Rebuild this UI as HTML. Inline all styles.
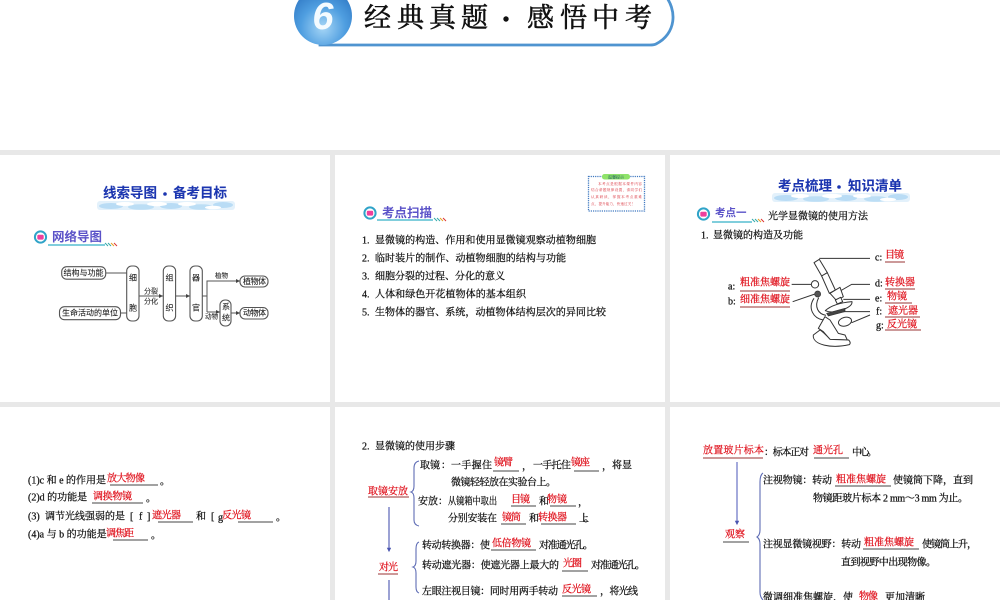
<!DOCTYPE html>
<html lang="zh"><head><meta charset="utf-8"><title>经典真题·感悟中考</title>
<style>
html,body{margin:0;padding:0;background:#fff;width:1000px;height:600px;overflow:hidden}
svg{display:block;filter:blur(.3px)}
text{font-family:"Liberation Serif","Noto Serif CJK SC",serif;font-size:10px;fill:#111;stroke:#111;stroke-width:.25;dominant-baseline:central}
.r{fill:#e0141f;stroke:#e0141f}
.s{font-size:8px;font-family:"Liberation Sans","Noto Sans CJK SC",sans-serif;fill:#222;stroke:#222;stroke-width:.08}
.u{stroke:#444;stroke-width:.9;fill:none}
.ru{stroke:#933;stroke-width:.9;fill:none}
.b{fill:#fff;stroke:#555;stroke-width:1.100}
.g{stroke:#555;stroke-width:1;fill:none}
.br{stroke:#5f6db5;stroke-width:1.100;fill:none}
.ti{font-family:"Liberation Sans","Noto Sans CJK SC",sans-serif;font-weight:700;font-size:13.500px;fill:#1c36b0;stroke:#1c36b0;stroke-width:.1}
.h{font-family:"Liberation Sans","Noto Sans CJK SC",sans-serif;font-weight:700;fill:#5a52c8;stroke:none}
.hd{font-size:27px;fill:#111;stroke:#111;stroke-width:.55}
.n{font-size:3.600px;fill:#d8303a;stroke:none}
.m{stroke:#333;stroke-width:3;fill:#fff;stroke-linejoin:round}
.l{stroke:#333;stroke-width:3;fill:none}
</style></head><body>
<svg width="1000" height="600" viewBox="0 0 1000 600" xmlns="http://www.w3.org/2000/svg">
<defs>
<radialGradient id="ball" cx=".5" cy=".7" r=".7"><stop offset="0" stop-color="#a6d6f6"/><stop offset=".55" stop-color="#4f9ee0"/><stop offset="1" stop-color="#2f78c4"/></radialGradient>
<marker id="a" markerWidth="5" markerHeight="5" refX="4" refY="2" orient="auto"><path d="M0 0L4 2L0 4z" fill="#444"/></marker>
<marker id="ab" markerWidth="5" markerHeight="5" refX="3" refY="2" orient="auto"><path d="M0 0L4 2L0 4z" fill="#4a55b0"/></marker>
<g id="ic"><circle r="5.600" fill="#fff" stroke="#2fa3c8" stroke-width="2"/><rect x="-3.200" y="-2.200" width="6.400" height="4.800" rx="1.200" fill="#ee3f9c"/></g>
<g id="tk"><path d="M0 0l3 3M3 0l3 3" stroke="#3aa" stroke-width="1"/><path d="M6 0l3 3" stroke="#e6a020" stroke-width="1"/><path d="M9 0l3 3" stroke="#d33" stroke-width="1"/></g>
<g id="cl">
<rect x="0" y="0" width="138" height="9" rx="3" fill="#e3f1fb"/>
<ellipse cx="14" cy="5" rx="12" ry="3" fill="#b9dcf5"/><ellipse cx="44" cy="6" rx="13" ry="2.800" fill="#bcdef5"/><ellipse cx="74" cy="5" rx="11" ry="3" fill="#b9dcf5"/><ellipse cx="104" cy="6" rx="12" ry="2.800" fill="#bcdef5"/><ellipse cx="126" cy="4" rx="10" ry="3" fill="#b9dcf5"/>
<ellipse cx="28" cy="3" rx="9" ry="2" fill="#fff"/><ellipse cx="60" cy="3" rx="10" ry="2.200" fill="#fff"/><ellipse cx="90" cy="3" rx="9" ry="2" fill="#fff"/><ellipse cx="116" cy="6.500" rx="8" ry="1.800" fill="#fff"/>
</g>
</defs>
<rect width="1000" height="600" fill="#fff"/>
<rect y="150" width="1000" height="5" fill="#e8e8e8"/>
<rect y="402" width="1000" height="5" fill="#e8e8e8"/>
<rect x="330" y="150" width="5" height="450" fill="#e8e8e8"/>
<rect x="665" y="150" width="5" height="450" fill="#e8e8e8"/>

<!-- Header -->
<path d="M320 -6H664C678 10 676 34 656 44Q654 45 650 45H320z" fill="#fff" stroke="#4f94d0" stroke-width="2.800"/>
<circle cx="323" cy="16" r="29" fill="url(#ball)"/>
<text x="323" y="17" text-anchor="middle" style="font-family:'Liberation Sans',sans-serif;font-weight:700;font-style:italic;font-size:38px;fill:#f4fbff;stroke:none">6</text>
<text class="hd" x="364" y="18">经</text><text class="hd" x="397" y="18">典</text><text class="hd" x="429" y="18">真</text><text class="hd" x="461" y="18">题</text>
<circle cx="506" cy="19" r="2.700" fill="#111"/>
<text class="hd" x="527" y="18">感</text><text class="hd" x="560" y="18">悟</text><text class="hd" x="592" y="18">中</text><text class="hd" x="625" y="18">考</text>

<!-- Panel 1 -->
<use href="#cl" x="97" y="201"/>
<text class="ti" x="103" y="193">线索导图</text><circle cx="165" cy="194" r="1.800" fill="#1c36b0"/><text class="ti" x="173" y="193">备考目标</text>
<use href="#ic" x="40.500" y="237"/>
<text class="h" x="52" y="237" style="font-size:12.500px">网络导图</text>
<path d="M48 245H105" stroke="#35b0c8" stroke-width="1.200"/><use href="#tk" x="105" y="243"/>
<rect class="b" x="61.700" y="266.700" width="44" height="12.500" rx="5"/>
<text class="s" x="63.500" y="273">结构与功能</text>
<rect class="b" x="59.500" y="306.700" width="61" height="13" rx="5"/>
<text class="s" x="62" y="313.200">生命活动的单位</text>
<rect class="b" x="126.700" y="266" width="12.300" height="55" rx="5"/>
<rect class="b" x="163.300" y="266" width="12.300" height="55" rx="5"/>
<rect class="b" x="190" y="266" width="12.300" height="55" rx="5"/>
<rect class="b" x="240" y="276" width="28" height="11" rx="5"/>
<rect class="b" x="240" y="307.500" width="28" height="11.500" rx="5"/>
<rect class="b" x="220" y="300" width="11" height="26" rx="5"/>
<text class="s" x="129" y="278">细</text><text class="s" x="129" y="308">胞</text>
<text class="s" x="165.500" y="278">组</text><text class="s" x="165.500" y="308">织</text>
<text class="s" x="192" y="278">器</text><text class="s" x="192" y="308">官</text>
<text class="s" x="222" y="307">系</text><text class="s" x="222" y="318">统</text>
<text class="s" x="144" y="292" style="font-size:7px">分裂</text><text class="s" x="144" y="302" style="font-size:7px">分化</text>
<text class="s" x="215" y="276" style="font-size:6.500px">植物</text><text class="s" x="205" y="317" style="font-size:6.500px">动物</text>
<text class="s" x="243" y="281.500" textLength="23">植物体</text><text class="s" x="243" y="313" textLength="23">动物体</text>
<path class="g" d="M106 273H126.500M120.500 313H126.500"/>
<path class="g" marker-end="url(#a)" d="M139 296H163"/><path class="g" marker-end="url(#a)" d="M176 296H190"/>
<path class="g" d="M202.300 296H207"/><path class="g" marker-end="url(#a)" d="M207 312V281H240"/><path class="g" marker-end="url(#a)" d="M207 312H220"/><path class="g" marker-end="url(#a)" d="M231 313H240"/>

<!-- Panel 2 -->
<rect x="588.500" y="176.500" width="56" height="34.500" fill="#fff" stroke="#3f78c0" stroke-width="1.300" stroke-dasharray="1.200 1"/>
<rect x="602" y="174" width="28" height="5.500" rx="2.500" fill="#8fe36a"/>
<text x="616" y="176.800" text-anchor="middle" style="font-size:4px;fill:#146;stroke:none">温馨提示</text>
<text class="n" x="598" y="184" textLength="44">本考点是根据本课件内容</text>
<text class="n" x="591" y="190" textLength="51">结合命题规律设置，请同学们</text>
<text class="n" x="591" y="197" textLength="51">认真研读，掌握本考点重难</text>
<text class="n" x="591" y="204" textLength="44">点，提升能力，快速过关！</text>
<use href="#ic" x="370" y="213"/>
<text class="h" x="382" y="213" style="font-size:12.500px">考点扫描</text>
<path d="M377 220H433" stroke="#35b0c8" stroke-width="1.200"/><use href="#tk" x="434" y="218"/>
<text x="362" y="241">1.</text><text x="375" y="241" textLength="221">显微镜的构造、作用和使用显微镜观察动植物细胞</text>
<text x="362" y="259">2.</text><text x="375" y="259" textLength="191">临时装片的制作、动植物细胞的结构与功能</text>
<text x="362" y="277">3.</text><text x="375" y="277" textLength="130">细胞分裂的过程、分化的意义</text>
<text x="362" y="295">4.</text><text x="375" y="295" textLength="151">人体和绿色开花植物体的基本组织</text>
<text x="362" y="313">5.</text><text x="375" y="313" textLength="231">生物体的器官、系统，动植物体结构层次的异同比较</text>

<!-- Panel 3 -->
<use href="#cl" x="772" y="193"/>
<text class="ti" x="778" y="186">考点梳理</text><circle cx="839" cy="187" r="1.800" fill="#1c36b0"/><text class="ti" x="848" y="186">知识清单</text>
<use href="#ic" x="703.500" y="214"/>
<text class="h" x="715" y="213" style="font-size:10.500px">考点一</text>
<path d="M712 222H752" stroke="#35b0c8" stroke-width="1.200"/><use href="#tk" x="752" y="219"/>
<text x="768" y="217" textLength="100">光学显微镜的使用方法</text>
<text x="701" y="236">1.</text><text x="713" y="236" textLength="90">显微镜的构造及功能</text>

<g transform="translate(790 250) scale(.33333)">
<path class="l" d="M88 25H240M5 103H65M8 155L75 132M130 135L185 103H240M160 148H240M150 185H240M185 218L240 195"/>
<path class="m" d="M72 38L88 28L112 68L95 78z"/>
<path class="m" d="M95 78L112 68L136 120L118 130z"/>
<circle class="m" cx="75" cy="103" r="11"/>
<circle cx="83" cy="132" r="9" fill="#555" stroke="#333" stroke-width="2"/>
<path class="l" d="M72 145C52 175 70 205 100 210M86 143C72 170 84 192 108 196"/>
<path class="m" d="M120 130L150 112L160 140L140 152z"/>
<path class="m" d="M136 150L152 142L158 155L142 162z"/>
<path class="m" d="M106 182Q130 160 186 155Q188 170 150 182Q125 190 106 182z"/>
<path d="M110 190L165 175L165 185L115 198z" fill="#444" stroke="#333" stroke-width="2"/>
<ellipse class="m" cx="165" cy="215" rx="20" ry="13" transform="rotate(-15 165 215)"/>
<path class="m" d="M85 235L105 200L120 210L145 250L165 255L172 270L120 268L100 245z"/>
<path class="m" d="M70 255C66 285 125 296 178 284Q184 278 176 270L120 268Q100 246 90 240z"/>
</g>

<text x="728" y="287">a:</text><text x="728" y="302">b:</text>
<text class="r" x="740" y="283" textLength="50">粗准焦螺旋</text><path class="ru" d="M740 291H790"/>
<text class="r" x="740" y="300" textLength="50">细准焦螺旋</text><path class="ru" d="M740 307H790"/>
<text x="875" y="258">c:</text><text class="r" x="885" y="255.500" textLength="19">目镜</text><path class="ru" d="M885 262H905"/>
<text x="875" y="284">d:</text><text class="r" x="885" y="283" textLength="30">转换器</text><path class="ru" d="M885 289H915"/>
<text x="875" y="299">e:</text><text class="r" x="887" y="297" textLength="20">物镜</text><path class="ru" d="M885 303H912"/>
<text x="876" y="312">f:</text><text class="r" x="888" y="311.500" textLength="30">遮光器</text><path class="ru" d="M885 317H920"/>
<text x="876" y="326">g:</text><text class="r" x="887" y="325" textLength="30">反光镜</text><path class="ru" d="M885 330H921"/>

<!-- Panel 4 -->
<text x="28" y="481">(1)c 和 e 的作用是</text>
<path class="u" d="M110 485H158"/><text class="r" x="107" y="479" textLength="38">放大物像</text><text x="160" y="482">。</text>
<text x="28" y="498">(2)d 的功能是</text>
<path class="u" d="M92 503H143"/><text class="r" x="93" y="497" textLength="39">调换物镜</text><text x="146" y="499">。</text>
<text x="28" y="517">(3)</text><text x="45" y="517" textLength="80">调节光线强弱的是</text><text x="130" y="517">[</text><text x="139" y="517">f</text><text x="147" y="517">]</text>
<path class="u" d="M158 522H193"/><text class="r" x="152" y="516" textLength="29">遮光器</text>
<text x="196" y="517">和</text><text x="211" y="517">[</text><text x="218" y="518">g</text>
<path class="u" d="M238 522H273"/><text class="r" x="222" y="516" textLength="29">反光镜</text><text x="276" y="518">。</text>
<text x="28" y="535">(4)a 与 b 的功能是</text>
<path class="u" d="M113 540H148"/><text class="r" x="106" y="534" textLength="28">调焦距</text><text x="151" y="536">。</text>

<!-- Panel 5 -->
<text x="362" y="447">2.</text><text x="375" y="447" textLength="80">显微镜的使用步骤</text>
<text class="r" x="368" y="492" textLength="40">取镜安放</text><path class="ru" d="M368 497H409"/>
<path class="br" d="M419 461Q414 462 414 468V486Q414 491 411 492Q414 493 414 498V520Q414 525 419 526"/>
<text x="420" y="466" textLength="20">取镜</text><text x="441" y="466">：</text><text x="451" y="466" textLength="41">一手握住</text>
<text class="r" x="494" y="463" textLength="19">镜臂</text><path class="u" d="M493 471H519"/><text x="522" y="467">，</text>
<text x="533" y="466" textLength="38">一手托住</text><text class="r" x="571" y="463" textLength="19">镜座</text><path class="u" d="M574 471H599"/><text x="602" y="467">，</text><text x="612" y="466" textLength="20">将显</text>
<text x="451" y="483" textLength="105">微镜轻轻放在实验台上。</text>
<text x="418" y="502" textLength="20">安放</text><text x="438" y="502">：</text><text x="448" y="502" textLength="49" lengthAdjust="spacingAndGlyphs">从镜箱中取出</text>
<text class="r" x="511" y="500" textLength="19">目镜</text><path class="u" d="M511 506H536"/><text x="539" y="502">和</text>
<text class="r" x="547" y="500" textLength="20">物镜</text><path class="u" d="M550 506H576"/><text x="578" y="503">，</text>
<text x="448" y="519" textLength="49">分别安装在</text><text class="r" x="502" y="518" textLength="19">镜筒</text><path class="u" d="M501 524H526"/><text x="529" y="519">和</text>
<text class="r" x="538" y="518" textLength="29">转换器</text><path class="u" d="M541 524H576"/><text x="579" y="519" textLength="15">上。</text>
<path d="M389 507V551" stroke="#4a55b0" stroke-width="1.100" marker-end="url(#ab)"/>
<text class="r" x="379" y="568" textLength="19">对光</text><path class="ru" d="M378 574H398"/>
<path d="M389 580V600" stroke="#4a55b0" stroke-width="1.100"/>
<path class="br" d="M419 542Q416 543 416 549V561Q416 566 413 567Q416 568 416 573V587Q416 592 419 593"/>
<text x="422" y="546" textLength="68">转动转换器：使</text><text class="r" x="492" y="544" textLength="39">低倍物镜</text><path class="u" d="M491 550H536"/><text x="539" y="546" textLength="54">对准通光孔。</text>
<text x="422" y="566" textLength="137">转动遮光器：使遮光器上最大的</text><text class="r" x="563" y="564" textLength="19">光圈</text><path class="u" d="M562 571H588"/><text x="591" y="566" textLength="54">对准通光孔。</text>
<text x="422" y="592" textLength="136">左眼注视目镜：同时用两手转动</text><text class="r" x="562" y="590" textLength="29">反光镜</text><path class="u" d="M562 596H597"/><text x="600" y="592" textLength="38">，将光线</text>

<!-- Panel 6 -->
<text class="r" x="703" y="451" textLength="61">放置玻片标本</text><path class="ru" d="M703 458H763"/>
<text x="764" y="453" textLength="45">：标本正对</text>
<text class="r" x="813" y="451" textLength="30">通光孔</text><path class="u" d="M814 458H849"/><text x="852" y="453" textLength="25">中心。</text>
<path d="M737 462V524" stroke="#5a64c0" stroke-width="1.100" marker-end="url(#ab)"/>
<text class="r" x="725" y="535" textLength="20">观察</text><path class="u" d="M723 542H749"/>
<path class="br" d="M763 473Q760 475 760 482V530Q760 535 757 537Q760 539 760 544V592Q760 597 763 600"/>
<text x="763" y="481" textLength="69">注视物镜：转动</text><text class="r" x="836" y="480" textLength="50">粗准焦螺旋</text><path class="u" d="M835 486H891"/><text x="893" y="481" textLength="80">使镜筒下降，直到</text>
<text x="813" y="499" textLength="155">物镜距玻片标本 2 mm～3 mm 为止。</text>
<text x="763" y="545" textLength="98">注视显微镜视野：转动</text><text class="r" x="864" y="543" textLength="50">粗准焦螺旋</text><path class="u" d="M863 549H919"/><text x="922" y="545" textLength="55">使镜筒上升，</text>
<text x="841" y="563" textLength="95">直到视野中出现物像。</text>
<text x="763" y="598" textLength="90">微调细准焦螺旋，使</text><text class="r" x="859" y="597" textLength="19">物像</text><text x="885" y="598" textLength="40">更加清晰</text>
</svg>
</body></html>
